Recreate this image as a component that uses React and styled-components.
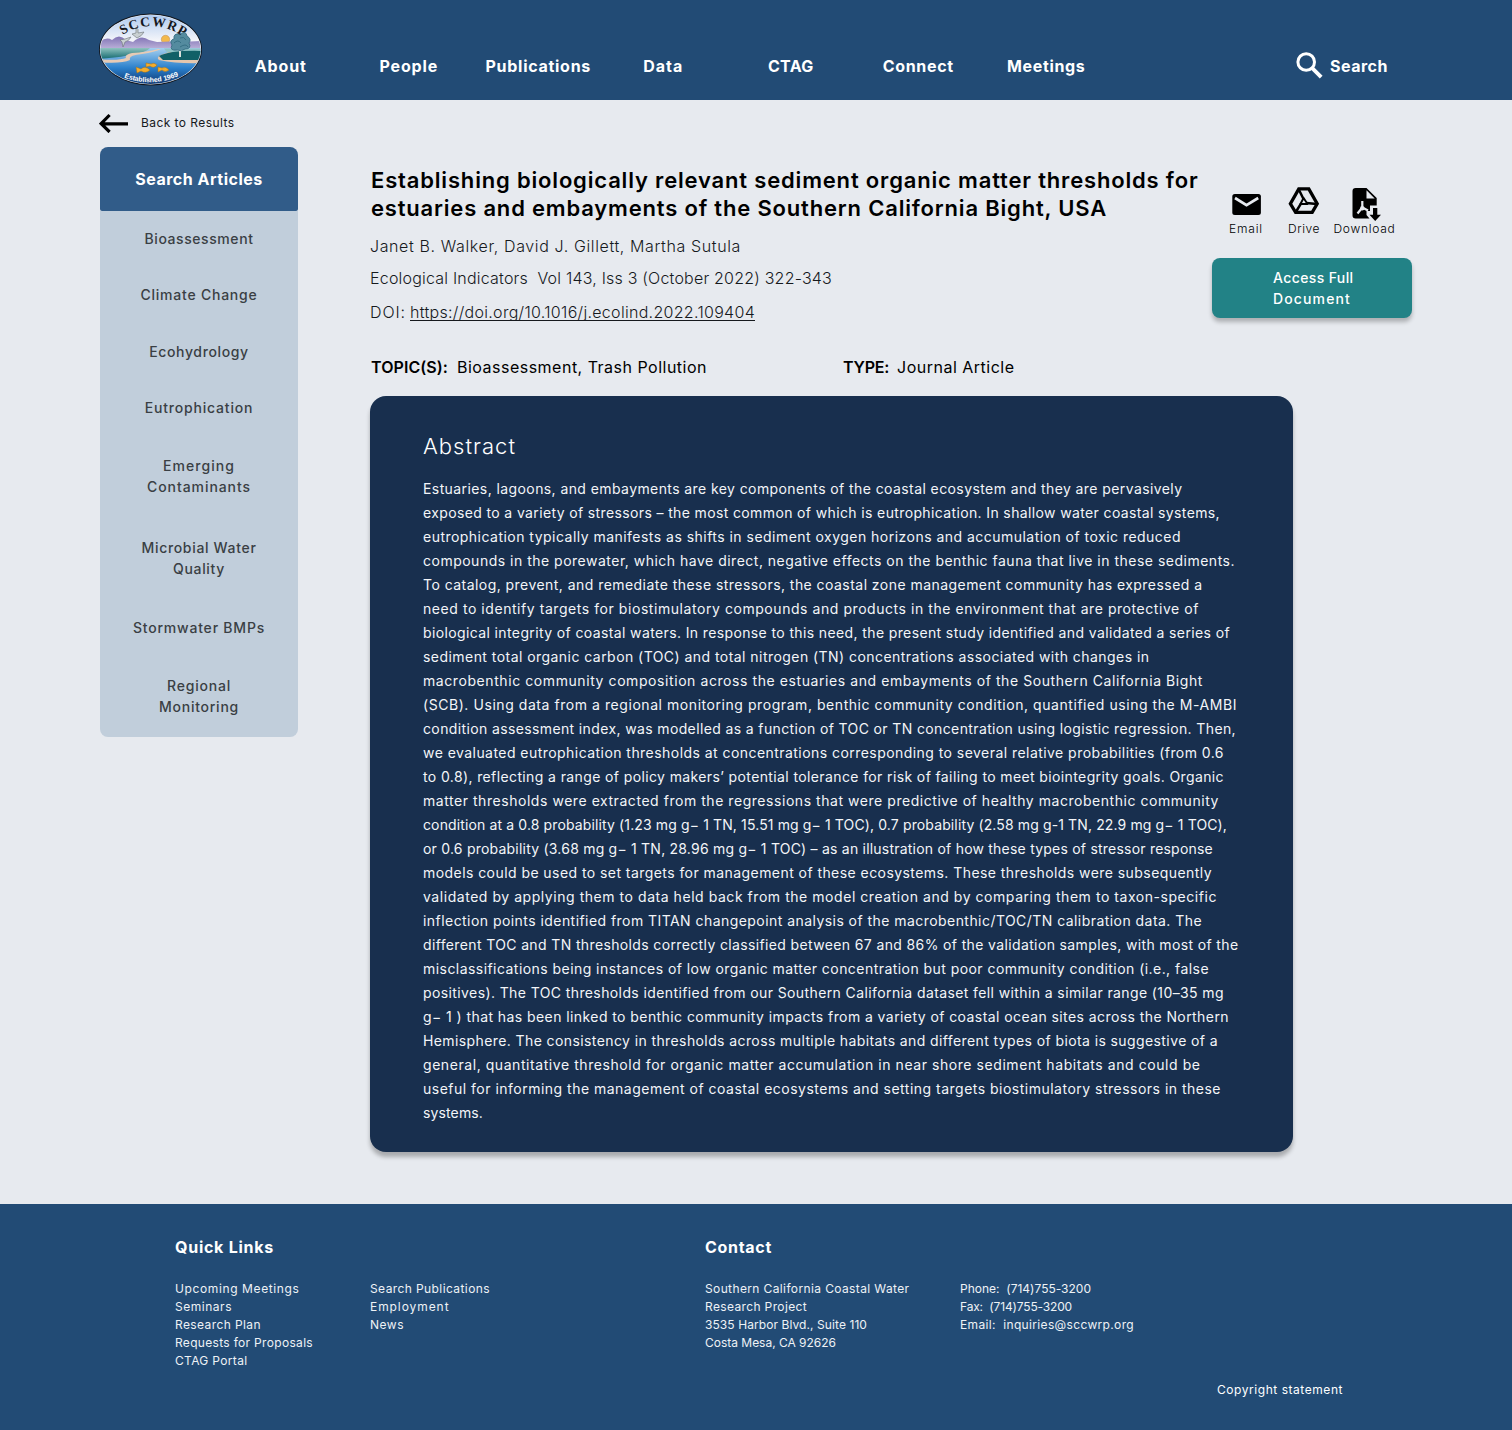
import React, { useLayoutEffect, useRef, useState } from "react";
import styled, { createGlobalStyle } from "styled-components";

const GlobalStyle = createGlobalStyle`
  * { box-sizing: border-box; }
  body { margin: 0; background: #e7eaef; font-family: Inter, "Open Sans", sans-serif; color: #000; }
  h1, h2, p, ul { margin: 0; padding: 0; font-weight: inherit; }
`;

const Line = styled.span`
  display: block;
  width: max-content;
  white-space: pre;
`;

/* Tracks a single line of text out to a given measure. */
function Tracked({ width, children }) {
  const ref = useRef(null);
  const [spacing, setSpacing] = useState(0);
  useLayoutEffect(() => {
    const el = ref.current;
    el.style.letterSpacing = "0px";
    const natural = el.getBoundingClientRect().width;
    const next = (width - natural) / el.textContent.length;
    el.style.letterSpacing = `${next}px`;
    setSpacing(next);
  }, [width, children]);
  return <Line ref={ref} style={{ letterSpacing: spacing }}>{children}</Line>;
}

const Page = styled.div`
  width: 1512px;
  height: 1430px;
  display: flex;
  flex-direction: column;
`;

const Header = styled.header`
  height: 100px;
  flex: none;
  padding: 13px 0 0 98px;
  display: flex;
  align-items: flex-start;
  background: #224b75;
  color: #fff;
`;

const Nav = styled.nav`
  display: flex;
  flex: none;
  width: 892px;
  margin: 43px 0 0 14px;
`;

const NavItem = styled.a`
  width: 127.5px;
  flex: none;
  padding-left: ${(p) => p.$shift}px;
  display: flex;
  justify-content: center;
  font-size: 16px;
  line-height: 20px;
  font-weight: 700;
`;

const SearchLink = styled.a`
  display: flex;
  align-items: center;
  gap: 5px;
  margin: 34px 0 0 183px;
  font-size: 16px;
  line-height: 20px;
  font-weight: 700;

  span { padding-top: 2px; }
`;

const Body = styled.div`
  height: 1104px;
  flex: none;
  display: flex;
  padding-left: 100px;
`;

const Side = styled.aside`
  width: 198px;
  flex: none;
`;

const Back = styled.a`
  display: flex;
  align-items: center;
  gap: 13px;
  height: 47px;
  padding-bottom: 2px;
  margin-left: -1px;
  font-size: 12px;
  color: #16191d;
`;

const SideTitle = styled.h2`
  height: 64px;
  display: flex;
  align-items: center;
  justify-content: center;
  border-radius: 8px 8px 2px 2px;
  background: #315c89;
  color: #fff;
  font-size: 16px;
  line-height: 20px;
  font-weight: 700;
`;

const Topics = styled.ul`
  list-style: none;
  height: 526px;
  background: #c1cedb;
  border-radius: 0 0 8px 8px;
`;

const Topic = styled.li`
  height: ${(p) => p.$h}px;
  display: flex;
  flex-direction: column;
  align-items: center;
  justify-content: center;
  color: #3a3f44;
  font-size: 14px;
  font-weight: 500;
  line-height: 21px;
`;

const Article = styled.main`
  width: 923px;
  margin-left: 72px;
  padding-top: 66px;
`;

const Top = styled.div`
  display: flex;
  height: 191px;
`;

const Info = styled.div`
  width: 842px;
  flex: none;
`;

const Title = styled.h1`
  padding-left: 1px;
  font-size: 22px;
  line-height: 28px;
  font-weight: 600;
`;

const Meta = styled.p`
  margin-top: ${(p) => p.$gap}px;
  display: flex;
  gap: 4px;
  height: 22px;
  font-size: 16px;
  line-height: 22px;
  font-weight: 300;
  color: #16191d;
`;

const Doi = styled.a`
  height: 20px;
  border-bottom: 1px solid #16191d;
`;

const Actions = styled.div`
  flex: none;
  width: 200px;
  padding-top: 21px;
`;

const IconRow = styled.div`
  display: flex;
  height: 71px;
  padding-left: 17px;
`;

const IconItem = styled.a`
  display: flex;
  flex-direction: column;
  align-items: center;
  width: ${(p) => p.$w}px;
  font-size: 12px;
  line-height: 14px;
  font-weight: 300;
`;

const IconBox = styled.span`
  display: flex;
  height: 35px;
`;

const AccessButton = styled.button`
  width: 200px;
  height: 60px;
  display: flex;
  flex-direction: column;
  justify-content: center;
  padding: 0 0 0 61px;
  border: 0;
  border-radius: 8px;
  background: #228286;
  color: #fff;
  font: 500 14px/21px Inter, "Open Sans", sans-serif;
  box-shadow: 0 4px 4px rgba(0, 0, 0, 0.25);
`;

const Facts = styled.div`
  display: flex;
  padding-left: 1px;
  height: 39px;
  font-size: 16px;
  line-height: 20px;
`;

const Fact = styled.div`
  display: flex;
  flex: none;
  width: 472px;
  gap: ${(p) => p.$gap}px;
`;

const Label = styled.b`
  font-weight: 600;
`;

const Abstract = styled.section`
  height: 756px;
  padding: 36px 0 0 53px;
  border-radius: 16px;
  background: #182f4e;
  color: #fff;
  box-shadow: 0 5px 4px rgba(0, 0, 0, 0.27);
`;

const AbstractTitle = styled.h2`
  height: 45px;
  font-size: 22px;
  line-height: 29px;
  font-weight: 300;
`;

const AbstractText = styled.p`
  font-size: 14px;
  line-height: 24px;
  color: #f3f5f8;
`;

const Footer = styled.footer`
  height: 226px;
  flex: none;
  display: flex;
  padding: 33px 0 0 175px;
  background: #224b75;
  color: #fff;
`;

const FooterGroup = styled.section`
  width: ${(p) => p.$w}px;
  flex: none;
`;

const FooterTitle = styled.h2`
  height: 43px;
  font-size: 16px;
  line-height: 21px;
  font-weight: 700;
`;

const FooterCols = styled.div`
  display: flex;
`;

const FooterCol = styled.div`
  width: ${(p) => p.$w}px;
  font-size: 12px;
  line-height: 18px;
  color: #eef2f6;
`;

const Copyright = styled.p`
  align-self: flex-end;
  padding-bottom: 31px;
  font-size: 12px;
  line-height: 18px;
`;

function Logo() {
  return (
    <svg width="105" height="74" viewBox="0 0 105 74">
      <defs>
        <clipPath id="oval"><ellipse cx="52.5" cy="36.5" rx="50" ry="34.5" /></clipPath>
        <linearGradient id="sky" x1="0" y1="0" x2="0" y2="1">
          <stop offset="0" stopColor="#a9c6ee" /><stop offset=".7" stopColor="#f5f6fa" />
        </linearGradient>
        <linearGradient id="hills" x1="0" y1="0" x2="0" y2="1">
          <stop offset="0" stopColor="#8073b4" /><stop offset="1" stopColor="#cfc6e6" />
        </linearGradient>
        <linearGradient id="sea" x1="0" y1="0" x2="0" y2="1">
          <stop offset="0" stopColor="#a5d0f0" /><stop offset=".5" stopColor="#2a80cc" /><stop offset="1" stopColor="#08265c" />
        </linearGradient>
        <linearGradient id="land" x1="0" y1="0" x2="0" y2="1">
          <stop offset="0" stopColor="#8fc3bf" /><stop offset="1" stopColor="#146a70" />
        </linearGradient>
        <path id="topArc" d="M24.5 22 Q55 3 88 25" />
        <path id="lowArc" d="M26 64.5 Q54 75 82 62.5" />
      </defs>
      <ellipse cx="52.5" cy="36.5" rx="51.5" ry="36" fill="#10151d" />
      <ellipse cx="52.5" cy="36.5" rx="50.6" ry="35" fill="#eef2f6" />
      <g clipPath="url(#oval)">
        <rect width="105" height="40" fill="url(#sky)" />
        <circle cx="67.5" cy="26.5" r="4.2" fill="#f3b94c" stroke="#c39565" strokeWidth=".6" />
        <path d="M0 30 Q8 23 14 27 Q21 20 28 27 L35 29 Q43 21 51 27 L59 29 Q73 28 82 29 L105 28 V40 H0Z" fill="url(#hills)" />
        <rect y="35" width="105" height="40" fill="url(#sea)" />
        <path d="M0 35 H52 Q48 40 34 41 Q28 44 0 46Z" fill="url(#land)" />
        <path d="M60 36 Q49 39 34 40 Q26 42 28 45 Q20 48 0 46 V49 Q23 51 32 47 Q30 42 44 41 Q57 39 63 36Z" fill="#e7cbb5" />
        <path d="M66 35.5 H105 V41 H70Z" fill="#8fc3c6" />
        <path d="M72 39 Q56 43 61 47 Q80 51 105 50 V46 H66 Q60 44 75 40Z" fill="#e4c6ad" />
        <path d="M61 43 Q73 37 105 38 V47 H65Z" fill="#116067" />
      </g>
      <path d="M82 44 V33 M79.5 37 H84.5" stroke="#f1f0e8" strokeWidth="1.8" />
      <path d="M79 37 Q71 38 74 32 Q71 27 76 26 Q75 20 82 21 Q88 17 89 23 Q94 26 91 30 Q94 36 87 36 Q84 39 79 37Z" fill="#548b9f" stroke="#2f687d" strokeWidth=".8" />
      <path d="M76 30 Q80 26 83 30 M82 25 Q86 23 88 27 M82 34 Q88 30 90 34" fill="none" stroke="#2f687d" strokeWidth=".8" />
      <g fill="#c9d0d2" stroke="#6b7277" strokeWidth=".6">
        <path d="M22 27 L27 26 L33 24 Q31 28 27 29 L25 34 L24 29Z" />
        <path d="M34 21 L38 20 L38 14 Q41 16 40 20 L46 19 Q44 23 39 25Z" />
      </g>
      <g fill="#f4ad2d" stroke="#a77017" strokeWidth=".5">
        <path d="M38 54 L43 56 Q47 52 52 57 Q48 61 43 58 L39 60Z" />
        <path d="M48 50 L53 51 Q56 49 59 52 Q56 56 52 53 L48 54Z" />
        <path d="M60 54 L64 55 Q68 53 71 57 Q67 60 64 57 L60 59Z" />
      </g>
      <text fontFamily="Liberation Serif, serif" fontSize="13.5" fontWeight="700" fill="#16181e" textLength="65"><textPath href="#topArc">SCCWRP</textPath></text>
      <text fontFamily="Liberation Sans, sans-serif" fontSize="7" fontWeight="700" fill="#fff" textLength="56"><textPath href="#lowArc">Established 1969</textPath></text>
    </svg>
  );
}

const SearchIcon = () => (
  <svg width="33" height="36" viewBox="0 0 33 36" fill="none" stroke="#fff" strokeWidth="3">
    <circle cx="14.2" cy="15" r="8.3" /><path d="M20 20.8 L29.2 30.2" strokeWidth="3.8" />
  </svg>
);
const BackIcon = () => (
  <svg width="29" height="20" viewBox="0 0 29 20" fill="none" stroke="#000" strokeWidth="3.2">
    <path d="M29 10.9 H3 M10.6 2 L2.1 10.6 L10.6 19" />
  </svg>
);
const MailIcon = () => (
  <svg width="30" height="35" viewBox="0 0 30 35">
    <rect x="1.3" y="7" width="28.6" height="21" rx="2.5" />
    <path d="M4 11 L15.5 18.2 L27.2 11" fill="none" stroke="#e7eaef" strokeWidth="2.7" />
  </svg>
);
const DriveIcon = () => (
  <svg width="32" height="35" viewBox="0 0 32 35" fill="none" stroke="#000" strokeWidth="3.3">
    <path d="M10.8 1.9 H20.8 L29.2 16.8 L24.2 25.3 H7.6 L2.4 16.8Z" />
    <path d="M10.8 2.5 L15.5 12 M18.5 16 L28.5 17 M12.8 16.8 L7.8 25" strokeWidth="2.5" />
    <path d="M15.6 11 L19.5 17 H12.4Z" strokeWidth="1.9" strokeLinejoin="round" />
  </svg>
);
const DownloadIcon = () => (
  <svg width="32" height="35" viewBox="0 0 32 35">
    <path d="M6.7 1 H17.5 L27.7 11 V18.5 H21 V24 H17.5 V28 L20.5 31.5 H6.7 Q3.5 31.5 3.5 28.5 V4 Q3.5 1 6.7 1Z" />
    <path d="M17.5 3.3 V11.5 H25.7Z" fill="#e7eaef" />
    <path d="M13.3 14 V20.5 L8.5 26.5 M13.3 20.5 L19 23.5" fill="none" stroke="#e7eaef" strokeWidth="2.2" />
    <circle cx="13.3" cy="21.3" r="2.2" fill="#e7eaef" />
    <path d="M24 21 H28.3 V27.8 H32 L26.2 34 L20.5 27.8 H24Z" />
  </svg>
);

const nav = [["About", 52, 0], ["People", 58.5, 1], ["Publications", 105.5, 5], ["Data", 40, 0], ["CTAG", 45.5, 0], ["Connect", 71, 0], ["Meetings", 78.5, 1]];

const topics = [
  [55, [["Bioassessment", 109]]],
  [57, [["Climate Change", 117]]],
  [56, [["Ecohydrology", 99.5]]],
  [57, [["Eutrophication", 108.5]]],
  [80, [["Emerging", 72], ["Contaminants", 104]]],
  [84, [["Microbial Water", 115], ["Quality", 52]]],
  [55, [["Stormwater BMPs", 132]]],
  [81, [["Regional", 64], ["Monitoring", 80]]],
];

const abstractLines = [
  ["Estuaries, lagoons, and embayments are key components of the coastal ecosystem and they are pervasively", 759.5],
  ["exposed to a variety of stressors – the most common of which is eutrophication. In shallow water coastal systems,", 797],
  ["eutrophication typically manifests as shifts in sediment oxygen horizons and accumulation of toxic reduced", 758],
  ["compounds in the porewater, which have direct, negative effects on the benthic fauna that live in these sediments.", 812],
  ["To catalog, prevent, and remediate these stressors, the coastal zone management community has expressed a", 779.5],
  ["need to identify targets for biostimulatory compounds and products in the environment that are protective of", 776],
  ["biological integrity of coastal waters. In response to this need, the present study identified and validated a series of", 807],
  ["sediment total organic carbon (TOC) and total nitrogen (TN) concentrations associated with changes in", 726.5],
  ["macrobenthic community composition across the estuaries and embayments of the Southern California Bight", 780],
  ["(SCB). Using data from a regional monitoring program, benthic community condition, quantified using the M-AMBI", 814],
  ["condition assessment index, was modelled as a function of TOC or TN concentration using logistic regression. Then,", 813],
  ["we evaluated eutrophication thresholds at concentrations corresponding to several relative probabilities (from 0.6", 801],
  ["to 0.8), reflecting a range of policy makers’ potential tolerance for risk of failing to meet biointegrity goals. Organic", 801],
  ["matter thresholds were extracted from the regressions that were predictive of healthy macrobenthic community", 796],
  ["condition at a 0.8 probability (1.23 mg g− 1 TN, 15.51 mg g− 1 TOC), 0.7 probability (2.58 mg g-1 TN, 22.9 mg g− 1 TOC),", 804],
  ["or 0.6 probability (3.68 mg g− 1 TN, 28.96 mg g− 1 TOC) – as an illustration of how these types of stressor response", 790],
  ["models could be used to set targets for management of these ecosystems. These thresholds were subsequently", 789],
  ["validated by applying them to data held back from the model creation and by comparing them to taxon-specific", 794],
  ["inflection points identified from TITAN changepoint analysis of the macrobenthic/TOC/TN calibration data. The", 779],
  ["different TOC and TN thresholds correctly classified between 67 and 86% of the validation samples, with most of the", 815.5],
  ["misclassifications being instances of low organic matter concentration but poor community condition (i.e., false", 786],
  ["positives). The TOC thresholds identified from our Southern California dataset fell within a similar range (10–35 mg", 801],
  ["g− 1 ) that has been linked to benthic community impacts from a variety of coastal ocean sites across the Northern", 806],
  ["Hemisphere. The consistency in thresholds across multiple habitats and different types of biota is suggestive of a", 795],
  ["general, quantitative threshold for organic matter accumulation in near shore sediment habitats and could be", 777.5],
  ["useful for informing the management of coastal ecosystems and setting targets biostimulatory stressors in these", 798],
  ["systems.", 60],
];

const quickLinks = [
  [195, [["Upcoming Meetings", 124.5], ["Seminars", 57], ["Research Plan", 86], ["Requests for Proposals", 138], ["CTAG Portal", 72.5]]],
  [200, [["Search Publications", 120], ["Employment", 79.5], ["News", 34]]],
];
const contact = [
  [255, [["Southern California Coastal Water", 204.5], ["Research Project", 102], ["3535 Harbor Blvd., Suite 110", 162], ["Costa Mesa, CA 92626", 131]]],
  [200, [["Phone:  (714)755-3200", 131], ["Fax:  (714)755-3200", 112], ["Email:  inquiries@sccwrp.org", 174]]],
];

const lines = (list) => list.map(([text, w]) => <Tracked key={text} width={w}>{text}</Tracked>);

export default function App() {
  return (
    <Page>
      <GlobalStyle />
      <Header>
        <Logo />
        <Nav>{nav.map(([t, w, shift]) => <NavItem key={t} $shift={shift}><Tracked width={w}>{t}</Tracked></NavItem>)}</Nav>
        <SearchLink><SearchIcon /><Tracked width={58}>Search</Tracked></SearchLink>
      </Header>
      <Body>
        <Side>
          <Back><BackIcon /><Tracked width={93.5}>Back to Results</Tracked></Back>
          <SideTitle><Tracked width={127.5}>Search Articles</Tracked></SideTitle>
          <Topics>{topics.map(([h, list]) => <Topic key={list[0][0]} $h={h}>{lines(list)}</Topic>)}</Topics>
        </Side>
        <Article>
          <Top>
            <Info>
              <Title>
                <Tracked width={827.5}>Establishing biologically relevant sediment organic matter thresholds for</Tracked>
                <Tracked width={736}>estuaries and embayments of the Southern California Bight, USA</Tracked>
              </Title>
              <Meta $gap={13}><Tracked width={371}>Janet B. Walker, David J. Gillett, Martha Sutula</Tracked></Meta>
              <Meta $gap={10}><Tracked width={462}>Ecological Indicators  Vol 143, Iss 3 (October 2022) 322-343</Tracked></Meta>
              <Meta $gap={12}>
                <Tracked width={36}>DOI:</Tracked>
                <Doi><Tracked width={345}>https://doi.org/10.1016/j.ecolind.2022.109404</Tracked></Doi>
              </Meta>
            </Info>
            <Actions>
              <IconRow>
                <IconItem $w={34}><IconBox><MailIcon /></IconBox><Tracked width={34}>Email</Tracked></IconItem>
                <IconItem $w={82}><IconBox><DriveIcon /></IconBox><Tracked width={32}>Drive</Tracked></IconItem>
                <IconItem $w={39}><IconBox><DownloadIcon /></IconBox><Tracked width={62}>Download</Tracked></IconItem>
              </IconRow>
              <AccessButton>
                <Tracked width={80.5}>Access Full</Tracked>
                <Tracked width={78}>Document</Tracked>
              </AccessButton>
            </Actions>
          </Top>
          <Facts>
            <Fact $gap={9}><Label><Tracked width={77}>TOPIC(S):</Tracked></Label><Tracked width={250}>Bioassessment, Trash Pollution</Tracked></Fact>
            <Fact $gap={8}><Label><Tracked width={46}>TYPE:</Tracked></Label><Tracked width={117.5}>Journal Article</Tracked></Fact>
          </Facts>
          <Abstract>
            <AbstractTitle><Tracked width={93}>Abstract</Tracked></AbstractTitle>
            <AbstractText>{lines(abstractLines)}</AbstractText>
          </Abstract>
        </Article>
      </Body>
      <Footer>
        <FooterGroup $w={530}>
          <FooterTitle><Tracked width={99}>Quick Links</Tracked></FooterTitle>
          <FooterCols>{quickLinks.map(([w, list]) => <FooterCol key={w} $w={w}>{lines(list)}</FooterCol>)}</FooterCols>
        </FooterGroup>
        <FooterGroup $w={512}>
          <FooterTitle><Tracked width={67}>Contact</Tracked></FooterTitle>
          <FooterCols>{contact.map(([w, list]) => <FooterCol key={w} $w={w}>{lines(list)}</FooterCol>)}</FooterCols>
        </FooterGroup>
        <Copyright><Tracked width={126}>Copyright statement</Tracked></Copyright>
      </Footer>
    </Page>
  );
}
